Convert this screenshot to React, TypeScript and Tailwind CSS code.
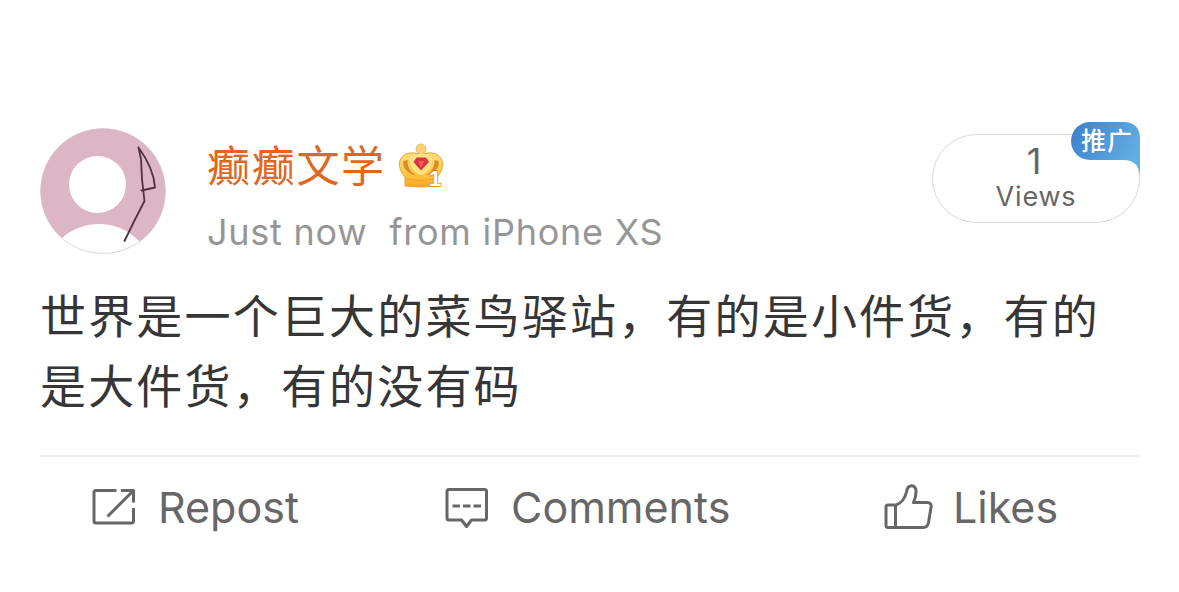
const Avatar = () => {
  return (
    <svg viewBox="0 0 126 126" className="size-[126px] shrink-0">
      <defs>
        <clipPath id="avatarClip">
          <circle cx="63" cy="63" r="62.5" />
        </clipPath>
      </defs>
      <g clipPath="url(#avatarClip)">
        <rect width="126" height="126" fill="#dcb6c4" />
        <circle cx="57.5" cy="56.500" r="28.5" fill="#fff" />
        <ellipse cx="59" cy="141" rx="51" ry="45" fill="#fff" />
      </g>
      <circle cx="63" cy="63" r="62.5" fill="none" stroke="#d3c6cc" strokeOpacity="0.6" />
      <path
        d="M84.5 113L94.500 92.500L104.500 73L102 51L101 31L98.500 19.500C107 31 114 45 115 59.500L101.500 62.500"
        fill="none"
        stroke="#51333f"
        strokeWidth="1.8"
        strokeLinecap="round"
        strokeLinejoin="round"
      />
    </svg>
  );
};

const Crown = () => {
  return (
    <svg viewBox="0 0 46 46" className="size-[46px]">
      <defs>
        <linearGradient id="gold" x1="0" y1="0" x2="0" y2="1">
          <stop offset="0" stopColor="#fbdc7c" />
          <stop offset="0.5" stopColor="#fdcf4e" />
          <stop offset="1" stopColor="#f9a820" />
        </linearGradient>
      </defs>
      <path
        d="M7 43V34C3 30 1 24 1.500 20C2 13 9 9 16 10C20 11 26 11 30 10C37 9 44 13 44.500 20C45 24 43 30 39 34V43Q23 45 7 43Z"
        fill="url(#gold)"
        stroke="#e9a13a"
      />
      <circle cx="23" cy="6" r="5" fill="#f9d272" stroke="#e8b566" />
      <path d="M12 14C12 24 16 30 23 32C30 30 34 24 34 14Q23 7 12 14Z" fill="#ffe380" />
      <path d="M5.500 18C4 25 10 31 18 32.500C12 28 9 24 9.500 17ZM40.500 18C42 25 36 31 28 32.500C34 28 37 24 36.500 17Z" fill="#e2862a" />
      <path d="M8 36Q23 39 38 36" fill="none" stroke="#f0a02a" />
      <path d="M18.500 14.500H28L31 19L23 27.500L15.500 19Z" fill="#dd3040" />
      <path d="M20 18L23 25L26.500 18Z" fill="#ee5a5c" />
      <text
        x="31"
        y="42.500"
        fontSize="22"
        fontWeight="700"
        fontFamily="Liberation Sans, sans-serif"
        fill="#fff"
        stroke="#e18a1b"
        strokeWidth="1.500"
        paintOrder="stroke"
      >
        1
      </text>
    </svg>
  );
};

const RepostIcon = () => {
  return (
    <svg viewBox="0 0 44 48" className="mt-[2px] h-12 w-11" fill="none" stroke="#676767" strokeWidth="3" strokeLinejoin="round">
      <path d="M24.500 6.500H4Q2 6.500 2 8.500V37Q2 39 4 39H39.500Q41.500 39 41.500 37V24M29 6.500H41.500V18.500M41 7L15.500 32.500" />
    </svg>
  );
};

const CommentIcon = () => {
  return (
    <svg viewBox="0 0 44 48" className="mt-[2px] h-12 w-11" fill="none" stroke="#676767" strokeWidth="3" strokeLinejoin="round">
      <path d="M4 5.500H39.500Q41.500 5.500 41.500 7.500V34Q41.500 36 39.500 36H26.500L21.500 42.500L16.500 36H4Q2 36 2 34V7.500Q2 5.500 4 5.500Z" />
      <path d="M7.500 22H15M18 22H25.500M28.500 22H36" />
    </svg>
  );
};

const LikeIcon = () => {
  return (
    <svg viewBox="0 0 50 48" className="mt-[2px] h-12 w-[50px]" fill="none" stroke="#676767" strokeWidth="3" strokeLinejoin="round">
      <path d="M4 21H12C18 19 21 14 22.500 8C23.500 0 31.500 0 32 6.500C32.300 11 31 15 29.500 18.500H43Q48 18.500 47 23.500L44.500 38.500Q43.500 43.500 39.500 43.500H4Q2 43.500 2 41.500V23Q2 21 4 21Z" />
      <path d="M11.500 21V43.500" />
    </svg>
  );
};

export default function App() {
  return (
    <main className="h-[592px] w-[1179px] overflow-hidden bg-white px-10 pt-[121px] font-[Inter,'Noto_Sans_CJK_SC',sans-serif]">
      <header className="flex h-[133px] w-[1100px] items-start">
        <div className="pt-[7px]">
          <Avatar />
        </div>
        <div className="ml-[41px] flex-1 pt-[17px]">
          <div className="flex h-[56px] items-center gap-[12px]">
            <h1 className="text-[43px] leading-[56px] tracking-[1.7px] whitespace-nowrap text-[#e2661c]">癫癫文学</h1>
            <Crown />
          </div>
          <p className="mt-[14px] text-[36px] leading-[48px] tracking-[0.75px] whitespace-pre text-[#969696]">
            {"Just now  from iPhone XS"}
          </p>
        </div>
        <div className="relative mt-[13px] h-[89px] w-[208px] rounded-full border border-[#d9d9d9] text-center text-[#666]">
          <div className="mt-[4px] pr-1 text-[36px] leading-[44px]">1</div>
          <div className="text-[27px] leading-[28px] tracking-[0.8px]">Views</div>
          <div className="absolute -top-[13px] -right-px h-[54px] w-[70px]">
            <svg viewBox="0 0 70 54" className="absolute inset-0">
              <defs>
                <linearGradient id="promo" x1="0" y1="0.2" x2="1" y2="0.6">
                  <stop offset="0" stopColor="#3e82cd" />
                  <stop offset="1" stopColor="#64b0e3" />
                </linearGradient>
              </defs>
              <path d="M20 0H53Q70 0 70 17V54C69 43 64 38 53 38H20A19 19 0 0 1 20 0Z" fill="url(#promo)" />
            </svg>
            <span className="relative block pl-[4px] text-[25px] leading-[38px] font-medium tracking-[1px] text-white">
              推广
            </span>
          </div>
        </div>
      </header>
      <p className="mt-[27px] h-[174px] w-[1100px] text-[46px] leading-[70px] tracking-[2.18px] whitespace-nowrap text-[#363636]">
        世界是一个巨大的菜鸟驿站，有的是小件货，有的
        <br />
        是大件货，有的没有码
      </p>
      <footer className="flex h-[104px] w-[1100px] border-t-2 border-[#efefef] pt-[25px] text-[43px] leading-[51px] text-[#676767]">
        <div className="flex w-[353px] gap-[22px] pl-[52px]">
          <RepostIcon />
          <span>Repost</span>
        </div>
        <div className="flex w-[439px] gap-[22px] pl-[52px]">
          <CommentIcon />
          <span>Comments</span>
        </div>
        <div className="flex gap-[19px] pl-[52px]">
          <LikeIcon />
          <span>Likes</span>
        </div>
      </footer>
    </main>
  );
}
